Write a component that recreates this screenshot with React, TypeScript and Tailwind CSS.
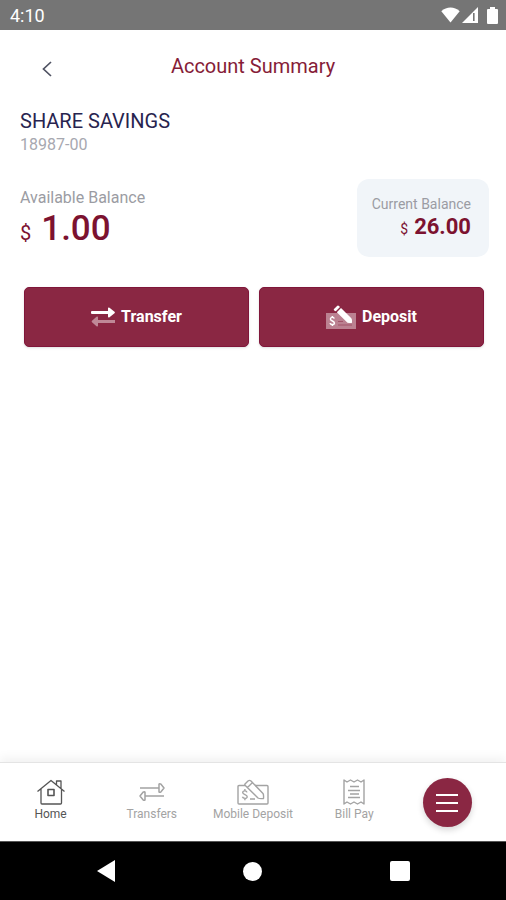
import type { ReactNode } from "react";

function StatusBar() {
  return (
    <div className="flex h-[30px] items-center justify-between bg-[#757575] pr-2 pl-[10px] text-white">
      <span className="pt-[2px] text-lg leading-6">4:10</span>
      <div className="flex items-center gap-[2px]">
        <svg width="19" height="16" viewBox="0 0 19 16" aria-hidden="true">
          <path d="M9.5 15.5 0.3 4.2C5.6-0.6 13.4-0.6 18.7 4.2Z" fill="#fff" />
        </svg>
        <svg width="16" height="16" viewBox="0 0 16 16" aria-hidden="true">
          <path d="M0 16 16 0V16Z" fill="#fff" />
          <path d="M11.800 6V14" stroke="#757575" strokeWidth="1.600" />
        </svg>
        <svg className="ml-[7px]" width="11" height="17" viewBox="0 0 11 17" aria-hidden="true">
          <path d="M3 0h5v2h2q1 0 1 1v13q0 1-1 1H1q-1 0-1-1V3q0-1 1-1h2Z" fill="#fff" />
        </svg>
      </div>
    </div>
  );
}

function TransferIcon() {
  return (
    <svg width="24" height="20" viewBox="0 0 24 20" aria-hidden="true">
      <path d="M1 4H17V1.500Q17 0 18.500 0.800L23.500 4.800Q24.300 5.500 23.500 6.200L18.500 10.300Q17 11 17 9.500V7H1Q0 7 0 6V5Q0 4 1 4Z" fill="#fff" />
      <path d="M24 13H7V10.500Q7 9 5.500 9.800L1 13.800Q0.200 14.500 1 15.200L5.500 19.300Q7 20 7 18.500V16H24Z" fill="#fff" opacity="0.45" />
    </svg>
  );
}

function DepositIcon() {
  return (
    <svg width="30" height="26" viewBox="0 0 30 26" aria-hidden="true">
      <rect x="0" y="9" width="30" height="16" fill="#fff" opacity="0.42" />
      <path d="M8.200 14.600C7.800 13 4.400 12.800 4.400 15S8.400 16.800 8.400 19 4.400 21 4 19.200M6.300 12V13.500M6.300 20.500V22" fill="none" stroke="#fff" strokeWidth="1.500" />
      <path d="M12 17.500H17M12 21H26" stroke="#8a2743" strokeWidth="1" opacity="0.5" />
      <path d="M8 5 10.800 2.200Q12 1 13.200 2.200L14 3 9.800 7.200 8.200 6.600Q7.300 5.800 8 5Z" fill="#fff" />
      <path d="M10.800 8.200 15 4 25.300 14.300Q26 15 26 16.500V18.700Q25 19.300 21.500 18.700Z" fill="#fff" />
    </svg>
  );
}

function ActionButton({ icon, label }: { icon: ReactNode; label: string }) {
  return (
    <button className="flex h-[60px] flex-1 items-center justify-center gap-[6px] rounded-[5px] border border-[#80163a] bg-[#8a2743] text-base font-bold text-white shadow-sm">
      {icon}
      <span>{label}</span>
    </button>
  );
}

function HomeIcon() {
  return (
    <svg width="30" height="26" viewBox="0 0 30 26" fill="none" stroke="currentColor" strokeWidth="1.300" strokeLinejoin="round" aria-hidden="true">
      <path d="M1.500 12.500 15 1.500 28.500 12.500M5 10V24Q5 25 6 25H24.500Q25.500 25 25.500 24V10M20.500 5.500V2H25V9.500" />
      <rect x="12" y="10.500" width="6" height="6" strokeWidth="1.600" />
    </svg>
  );
}

function TransfersIcon() {
  return (
    <svg width="26" height="26" viewBox="0 0 26 26" fill="none" stroke="currentColor" strokeWidth="1.500" strokeLinejoin="round" aria-hidden="true">
      <path d="M1 9H20M20 5.200V12.800Q20.500 13.800 22 12.800L25 9 22 5.200Q20.500 4.200 20 5.200ZM25 17H6M6 13.200V20.800Q5.500 21.800 4 20.800L1 17 4 13.200Q5.500 12.200 6 13.200Z" />
    </svg>
  );
}

function MobileDepositIcon() {
  return (
    <svg width="32" height="26" viewBox="0 0 32 26" fill="none" stroke="currentColor" strokeWidth="1.400" strokeLinejoin="round" aria-hidden="true">
      <path d="M8 6.500H2Q1 6.500 1 7.500V24Q1 25 2 25H30Q31 25 31 24V7.500Q31 6.500 30 6.500H18" />
      <path d="M8 5 11 2Q12.500 0.800 14 2L26 14.500Q26.800 15.500 26.500 19.500 22.500 20 21 19L8.300 6.500Q7.500 5.700 8 5ZM10.500 8.500 15 4" />
      <path d="M10 13.300C9.500 11.300 5.700 11.300 5.700 13.600S10.200 15.400 10.200 17.700 6 19.800 5.400 17.800M7.900 10V11.700M7.900 19.400V21.200M13 20H18" />
    </svg>
  );
}

function BillPayIcon() {
  return (
    <svg width="24" height="26" viewBox="0 0 24 26" fill="none" stroke="currentColor" strokeWidth="1.400" strokeLinejoin="round" aria-hidden="true">
      <path d="M2 1 5 3 8.500 1 12 3 15.500 1 19 3 22 1V25L19 23 15.500 25 12 23 8.500 25 5 23 2 25Z" />
      <path d="M8 7.500H17M6 11.500H18M8 15H17M6 18.500H18" />
    </svg>
  );
}

function NavItem({ icon, label, active = false }: { icon: ReactNode; label: string; active?: boolean }) {
  return (
    <a
      href="#"
      className={`flex flex-col items-center gap-px pt-px text-xs leading-4 whitespace-nowrap ${active ? "text-[#555555]" : "text-[#a3a3a3]"}`}
    >
      {icon}
      <span>{label}</span>
    </a>
  );
}

export default function App() {
  return (
    <div className="flex min-h-screen flex-col bg-white font-[Roboto,sans-serif]">
      <StatusBar />

      <header className="grid grid-cols-[60px_1fr_60px] items-center pt-[22px]">
        <button aria-label="Back" className="flex justify-end pt-[6px] pr-2 text-[#4f5262]">
          <svg width="10" height="16" viewBox="0 0 10 16" fill="none" stroke="currentColor" strokeWidth="1.700" aria-hidden="true">
            <path d="M9 1 1.500 8 9 15" />
          </svg>
        </button>
        <h1 className="text-center text-xl leading-7 text-[#861c38]">Account Summary</h1>
      </header>

      <main className="flex-1">
        <section className="px-5 pt-[29px]">
          <h2 className="text-xl leading-6 text-[#28244f]">SHARE SAVINGS</h2>
          <p className="text-base leading-6 text-[#a7a8b0]">18987-00</p>
        </section>

        <section className="flex items-start justify-between pt-[22px] pr-[17px] pl-5">
          <div className="pt-[7px]">
            <p className="text-base leading-6 text-[#9b9ca3]">Available Balance</p>
            <p className="flex items-baseline gap-[10px] text-[#7c1230]">
              <span className="text-xl">$</span>
              <span className="text-[35px] leading-[38px] font-medium">1.00</span>
            </p>
          </div>
          <div className="rounded-xl bg-[#f1f5f9] pt-[15px] pr-[18px] pb-4 pl-[15px] text-right">
            <p className="text-sm leading-5 text-[#9b9ca3]">Current Balance</p>
            <p className="flex items-baseline justify-end gap-[6px] text-[#7c1230]">
              <span className="text-sm leading-6">$</span>
              <span className="text-[22px] leading-[26px] font-bold">26.00</span>
            </p>
          </div>
        </section>

        <div className="flex gap-[10px] pt-[30px] pr-[22px] pl-6">
          <ActionButton icon={<TransferIcon />} label="Transfer" />
          <ActionButton icon={<DepositIcon />} label="Deposit" />
        </div>
      </main>

      <nav className="grid h-[79px] grid-cols-5 items-start border-t border-[#e4e4e4] bg-white pt-[15px] shadow-[0_-4px_10px_rgba(0,0,0,0.06)]">
        <NavItem icon={<HomeIcon />} label="Home" active />
        <NavItem icon={<TransfersIcon />} label="Transfers" />
        <NavItem icon={<MobileDepositIcon />} label="Mobile Deposit" />
        <NavItem icon={<BillPayIcon />} label="Bill Pay" />
        <div className="flex justify-center pr-4">
          <button aria-label="Menu" className="flex size-[49px] items-center justify-center rounded-full bg-[#8a2743] shadow-[0_3px_6px_rgba(0,0,0,0.16)]">
            <svg width="22" height="18" viewBox="0 0 22 18" stroke="#fff" strokeWidth="2" aria-hidden="true">
              <path d="M0 1H22M0 9H22M0 17H22" />
            </svg>
          </button>
        </div>
      </nav>

      <div className="grid h-[59px] grid-cols-3 items-center justify-items-center border-t border-[#555555] bg-black px-[33px]">
        <button aria-label="System back">
          <svg width="18" height="22" viewBox="0 0 18 22" aria-hidden="true">
            <path d="M0 11 18 0V22Z" fill="#fff" />
          </svg>
        </button>
        <button aria-label="System home" className="size-[19px] rounded-full bg-white" />
        <button aria-label="Recent apps" className="size-5 rounded-[2px] bg-white" />
      </div>
    </div>
  );
}
